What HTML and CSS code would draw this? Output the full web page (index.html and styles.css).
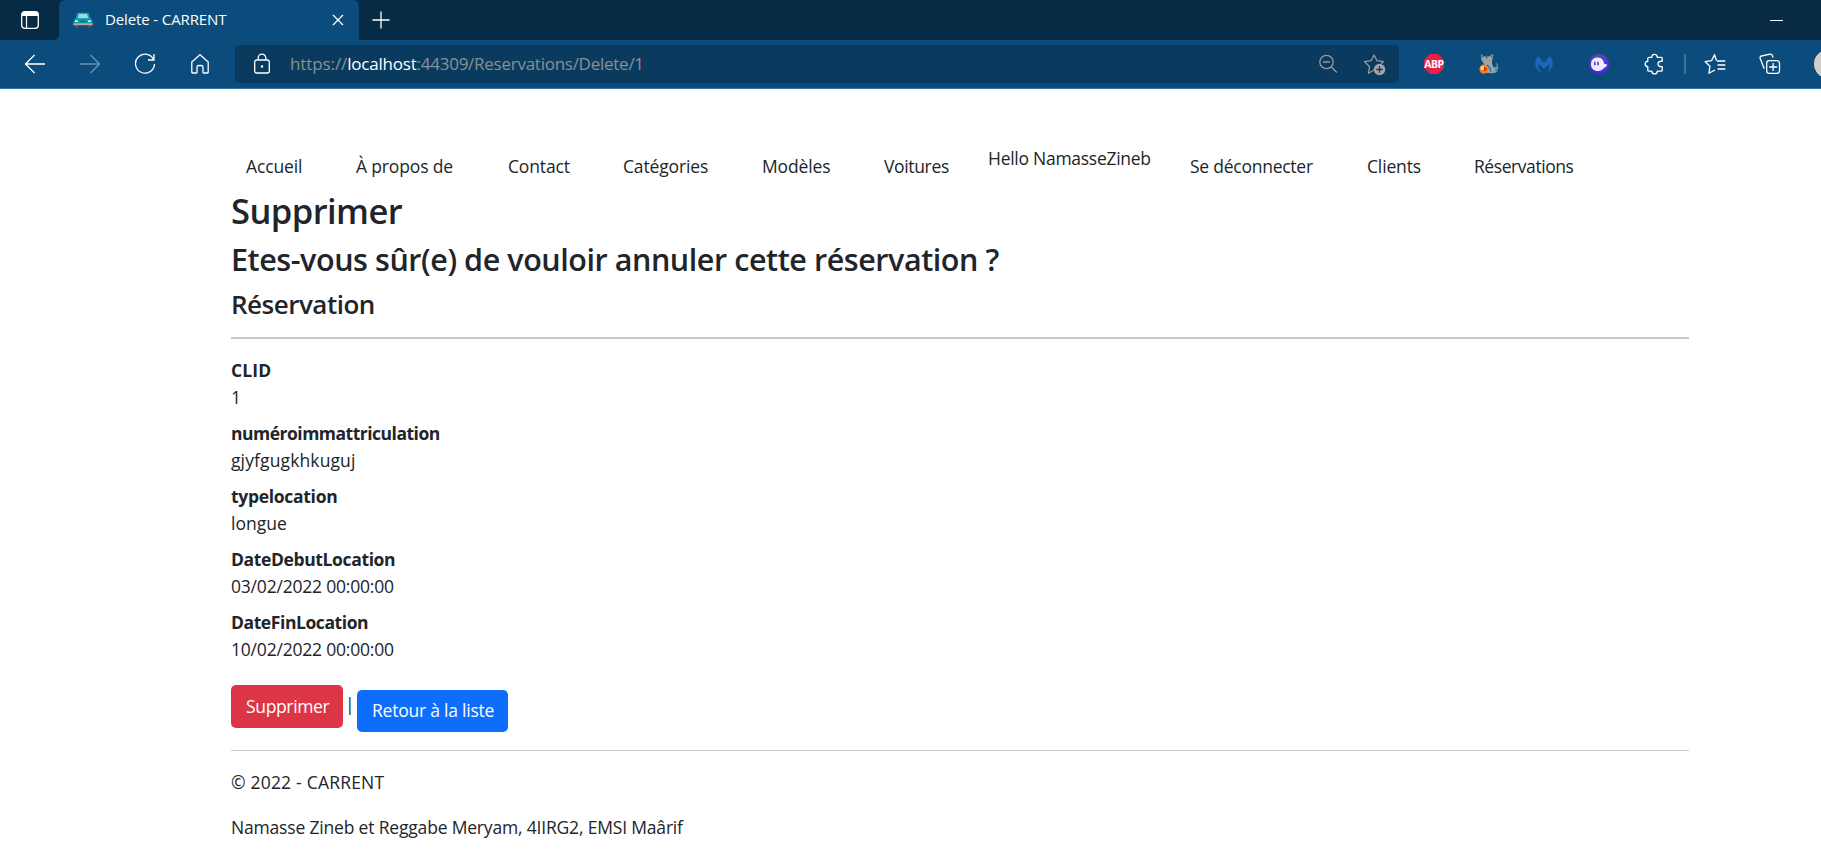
FILE: index.html
```html
<!DOCTYPE html>
<html lang="fr">
<head>
<meta charset="utf-8">
<title>Delete - CARRENT</title>
<link rel="stylesheet" href="styles.css">
</head>
<body>
<div class="tabbar">
  <div class="tabmenu">
    <svg width="20" height="20" viewBox="0 0 20 20" fill="none" stroke="#fff" stroke-width="1.3"><rect x="1.7" y="1.7" width="16.6" height="16.6" rx="3"/><path d="M2 4h16" stroke-width="4"/><path d="M6.5 5v13" stroke-width="1.2"/></svg>
  </div>
  <div class="tab">
    <svg width="20" height="16" viewBox="0 0 20 16"><path d="M2 13h3v2.6H2zM15 13h3v2.6h-3z" fill="#5c5550"/><path d="M4.6.8h10.8L17.6 7H2.400z" fill="#1aa3b8"/><path d="M6 2h8l1.300 4.300H4.700z" fill="#8fe0e2"/><path d="M2 6.500h16c1.200 1 1.600 2.500 1.600 5H.4c0-2.500.4-4 1.600-5z" fill="#1594b0"/><path d="M.3 11.200h19.400v2H.3z" fill="#b9a99c"/><path d="M2 8.500h3v1.600H2zM15 8.500h3v1.600h-3z" fill="#fff"/><path d="M7 8.700h6v1.500H7z" fill="#0a708d"/></svg>
    <span class="tab-title">Delete - CARRENT</span>
    <svg class="tab-close" width="12" height="12" viewBox="0 0 12 12" stroke="#fff" stroke-width="1.3"><path d="M1 1l10 10M11 1L1 11"/></svg>
  </div>
  <svg class="newtab" width="18" height="18" viewBox="0 0 18 18" stroke="#fff" stroke-width="1.3"><path d="M9 .5v17M.5 9h17"/></svg>
  <div class="minimise"></div>
</div>
<div class="toolbar">
  <div class="slot"><svg width="22" height="22" viewBox="0 0 22 22" fill="none" stroke="#fff" stroke-width="1.300"><path d="M21 11H1.500M10.500 2L1.500 11l9 9"/></svg></div>
  <div class="slot dim"><svg width="22" height="22" viewBox="0 0 22 22" fill="none" stroke="#fff" stroke-width="1.300"><path d="M1 11h19.500M11.500 2l9 9-9 9"/></svg></div>
  <div class="slot"><svg width="22" height="22" viewBox="0 0 22 22" fill="none" stroke="#fff" stroke-width="1.300"><path d="M19.800 7A9.500 9.500 0 1 0 20.500 11M20 1v6h-6"/></svg></div>
  <div class="slot"><svg width="22" height="22" viewBox="0 0 22 22" fill="none" stroke="#fff" stroke-width="1.300" stroke-linejoin="round"><path d="M11 1.700L2.800 9v10.300q0 .7.700.7h3.800q.7 0 .7-.7v-5q0-1.800 1.800-1.800h2.400q1.800 0 1.800 1.800v5q0 .7.700.7h3.800q.7 0 .7-.7V9z"/></svg></div>
  <div class="address">
    <svg class="lock" width="18" height="22" viewBox="0 0 18 22" fill="none" stroke="#fff" stroke-width="1.300"><rect x="1.700" y="7" width="14.600" height="13" rx="2"/><path d="M5.200 7V5a3.800 3.800 0 0 1 7.600 0v2"/><circle cx="9" cy="13.500" r="1.200" fill="#fff" stroke="none"/></svg>
    <div class="url"><span class="scheme">https://</span><span class="host">localhost</span><span class="path">:44309/Reservations/Delete/1</span></div>
    <svg class="zoomout" width="20" height="20" viewBox="0 0 20 20" fill="none" stroke="#939a9f" stroke-width="1.300"><circle cx="8.500" cy="8" r="6.700"/><path d="M13.300 13l5.500 5.500M5 8h7"/></svg>
    <svg class="favadd" width="23" height="23" viewBox="0 0 23 23" fill="none" stroke="#939a9f" stroke-width="1.300"><path d="M11 17l-5.500 3.200 1.100-6.800L1.500 8.700l6.600-1L11 2l3 5.700 6.500 1-2.500 2" stroke-linejoin="round"/><circle cx="16.500" cy="16.500" r="5.700" fill="#a1a5a8" stroke="none"/><path d="M16.500 13.200v6.600M13.200 16.500h6.600" stroke="#0a3b5f"/></svg>
  </div>
  <div class="extensions">
    <div class="slot"><div class="abp"><span>ABP</span></div></div>
    <div class="slot"><svg width="20" height="20" viewBox="0 0 20 20"><path d="M14 13c3.500 1 4.500-1 2.500-4.500 3 1 4 7.500.5 10l-5 1z" fill="#6a9ab4"/><path d="M2 0l3 2.500h4.500L14.500 0l-1.500 7q-.5 2 .5 4 2.500 4 2 8H5q-2-5 0-9L2.500 6z" fill="#8fa9b8"/><path d="M8 11l3 3 1 4M7.800 1.500v3M4 3.500l-1-2M12 3.500l1-2M16.500 12l2 .5M16.500 15.500l2 .5" fill="none" stroke="#436078" stroke-width="1.200"/><circle cx="5.500" cy="6" r="1.200" fill="#ff7a32"/><circle cx="10.300" cy="6.300" r="1.200" fill="#ff7a32"/><circle cx="5" cy="15.200" r="4.600" fill="#f47b20"/><circle cx="3.500" cy="14" r="2.200" fill="#ffd05c"/><path d="M5 12.500l3 3-3 2z" fill="#b92f18"/></svg></div>
    <div class="slot"><svg width="18" height="20" viewBox="0 0 18 20" fill="#2163b8"><path d="M3.300 2L9 9l5.700-7C18.300 5.500 19 11 16 15c-1.200 1.700-2.500 2.500-4 3 2.500-2.600 3-5.600 2.200-8L9 15 3.800 10C3 12.500 3.700 15.500 7 18.300 3 17.500.5 14 .2 10.500 0 7 1.300 4 3.300 2z"/></svg></div>
    <div class="slot"><svg width="20" height="20" viewBox="0 0 20 20"><defs><linearGradient id="g" x2="0" y2="1"><stop stop-color="#534bb1"/><stop offset="1" stop-color="#551bf9"/></linearGradient></defs><circle cx="10" cy="10" r="10" fill="url(#g)"/><path d="M2 10.500C2 6 5 3.500 8.500 3.500c4 0 6.300 2.800 6.500 6 1 .8 2 .8 3 .5 0 2-1 3.300-2.700 3.500-1.300 2.200-3.300 3.500-6.300 3.500-4 0-7-2.500-7-6.500z" fill="#f0edff"/><path d="M5.800 7.800v3.400M9 7.800v3.400" stroke="#4a2fbd" stroke-width="1.500"/></svg></div>
    <div class="slot"><svg width="20" height="22" viewBox="0 0 20 22" fill="none" stroke="#fff" stroke-width="1.300" stroke-linejoin="round"><path d="M4.800 4.300h3C7.800 2.300 8.800 1.300 10.500 1.300s2.700 1 2.700 3h4q1 0 1 1v3c-3-.3-4.200.9-4.200 2.700s1.200 3 4.200 2.700v3.500q0 1-1 1h-4c0 2-1 2.700-2.700 2.700s-2.700-.7-2.700-2.700h-3q-1 0-1-1v-3.500C2 13.700 1.200 12.800 1.200 11S2 8.300 3.800 8.300v-3q0-1 1-1z"/></svg></div>
  </div>
  <div class="separator"></div>
  <svg class="favlist" width="22" height="22" viewBox="0 0 22 22" fill="none" stroke="#fff" stroke-width="1.300" stroke-linejoin="round"><path d="M12.500 7.700L10.500 1.700l-3 6-6.300 1 4.700 4.600-1 7 6.100-3.300M13 8h8.300M13.500 12h7.800M13.500 16h7.800"/></svg>
  <svg class="collections" width="22" height="22" viewBox="0 0 22 22" fill="none" stroke="#fff" stroke-width="1.300"><rect x="7.700" y="7.700" width="12.800" height="12.600" rx="2.500"/><path d="M14.100 10v8M10.100 14h8M5.300 15.700L1.200 5.500q-.6-2 1.300-2.500L11 1.200q1.800-.3 2.400 1.400l.6 2"/></svg>
  <div class="avatar"></div>
</div>
<div class="container">
  <nav class="nav">
    <a>Accueil</a><a>À propos de</a><a>Contact</a><a>Catégories</a><a>Modèles</a><a class="n6">Voitures</a><span class="hello">Hello NamasseZineb</span><a class="logout">Se déconnecter</a><a>Clients</a><a class="n10">Réservations</a>
  </nav>
  <h1>Supprimer</h1>
  <h3>Etes-vous sûr(e) de vouloir annuler cette réservation ?</h3>
  <h4>Réservation</h4>
  <hr class="rule">
  <dl>
    <dt class="clid">CLID</dt><dd>1</dd>
    <dt class="immat">numéroimmattriculation</dt><dd class="plate">gjyfgugkhkuguj</dd>
    <dt>typelocation</dt><dd>longue</dd>
    <dt class="debut">DateDebutLocation</dt><dd class="date">03/02/2022 00:00:00</dd>
    <dt class="fin">DateFinLocation</dt><dd class="date">10/02/2022 00:00:00</dd>
  </dl>
  <div class="actions"><button class="btn danger">Supprimer</button><span class="pipe">|</span><a class="btn primary">Retour à la liste</a></div>
  <hr class="foot-rule">
  <footer>
    <p class="copy">© 2022 - CARRENT</p>
    <p class="authors">Namasse Zineb et Reggabe Meryam, 4IIRG2, EMSI Maârif</p>
  </footer>
</div>
</body>
</html>
```
FILE: styles.css
```css
* { box-sizing: border-box; }
body { margin: 0; height: 858px; overflow: hidden; background: #fff; color: #212529; font: 17.5px/27px "Open Sans", sans-serif; }
svg { display: block; flex: none; }

.tabbar { display: flex; align-items: center; height: 40px; background: #082b45; }
.tabmenu { display: flex; align-items: center; justify-content: center; width: 59px; height: 40px; border-radius: 0 0 5px 0; box-shadow: 6px 6px 0 #0c4c7c; background: #082b45; }
.tab { display: flex; align-items: center; width: 300px; height: 40px; padding: 0 15px 0 14px; border-radius: 6px 6px 0 0; background: #0c4c7c; color: #fff; }
.tab-title { margin: 0 0 2px 12px; font-size: 15px; line-height: 20px; letter-spacing: -.12px; }
.tab-close { margin-left: auto; }
.newtab { margin-left: 13px; }
.minimise { width: 13px; height: 1px; margin: 0 38px 0 auto; background: #fff; }

.toolbar { display: flex; align-items: center; height: 49px; padding: 0 0 0 7px; background: #0c4c7c; border-bottom: 1px solid #3a74a3; overflow: hidden; }
.slot { display: flex; flex: none; align-items: center; justify-content: center; width: 55px; }
.dim { opacity: .4; }
.address { display: flex; flex: none; align-items: center; width: 1164px; height: 38px; margin-left: 8px; padding: 0 13px 0 18px; border-radius: 5px; background: #0a3b5f; }
.url { display: flex; margin-left: 19px; font-size: 17px; line-height: 26px; color: #8b9092; }
.scheme { letter-spacing: -.1px; }
.host { color: #fff; letter-spacing: -.2px; }
.path { letter-spacing: -.26px; }
.zoomout { margin-left: auto; }
.favadd { margin-left: 25px; }
.extensions { display: flex; flex: none; margin-left: 7.500px; }
.abp { display: flex; align-items: center; justify-content: center; width: 20px; height: 20px; background: #ed1e45; color: #fff; font: 700 10.5px/20px "Open Sans", sans-serif; letter-spacing: -.5px; clip-path: polygon(30% 0, 70% 0, 100% 30%, 100% 70%, 70% 100%, 30% 100%, 0 70%, 0 30%); }
.separator { flex: none; width: 2px; height: 20px; margin-left: 2px; background: #3d709a; }
.favlist { margin-left: 18px; }
.collections { margin-left: 33px; }
.avatar { flex: none; width: 28px; height: 28px; margin-left: 33px; border-radius: 50%; background: #d2cfcb; }

.container { width: 1458px; margin-left: 231px; padding-top: 56px; }
.nav { display: grid; grid-template-columns: 110px 152px 115px 139px 122px 104px 202px 177px 107px 100px; height: 44px; padding-left: 15px; white-space: nowrap; letter-spacing: -.15px; }
.nav a { padding-top: 8px; }
.nav .n6 { letter-spacing: -.35px; }
.nav .hello { letter-spacing: -.27px; }
.nav .logout { letter-spacing: -.25px; }
.nav .n10 { letter-spacing: -.43px; }
h1, h3, h4 { margin: 0; font-weight: 600; }
h1 { font-size: 34.5px; line-height: 43px; letter-spacing: -.55px; }
h3 { margin-top: 8px; font-size: 30.5px; line-height: 38px; letter-spacing: -.44px; }
h4 { margin-top: 10px; font-size: 26px; line-height: 33px; letter-spacing: -.5px; }
.rule { height: 2px; margin: 16px 0 18px; border: 0; background: #c8c8c8; }
dl { margin: 0; }
dt { font-weight: 700; letter-spacing: -.3px; }
.clid { letter-spacing: .1px; }
.immat { letter-spacing: -.5px; }
.debut { letter-spacing: -.37px; }
.fin { letter-spacing: -.42px; }
dd { margin: 0 0 9px; }
.plate { letter-spacing: .12px; }
.date { letter-spacing: -.2px; }
.actions { display: flex; align-items: flex-start; height: 64px; padding-top: 13px; }
.btn { height: 43px; padding: 0 0 0 15px; border: 0; border-radius: 5px; color: #fff; font: inherit; line-height: 43px; text-align: left; }
.danger { width: 112px; background: #dc3545; letter-spacing: -.35px; }
.pipe { width: 14px; margin-top: 6px; padding-left: 2px; }
.primary { width: 151px; height: 42px; margin-top: 5px; background: #0d6efd; line-height: 41px; letter-spacing: -.23px; }
.foot-rule { height: 1px; margin: 14px 0 18px; border: 0; background: #c8c8c8; }
footer p { margin: 0 0 18px; }
.copy { letter-spacing: .2px; }
.authors { letter-spacing: -.18px; }
```
